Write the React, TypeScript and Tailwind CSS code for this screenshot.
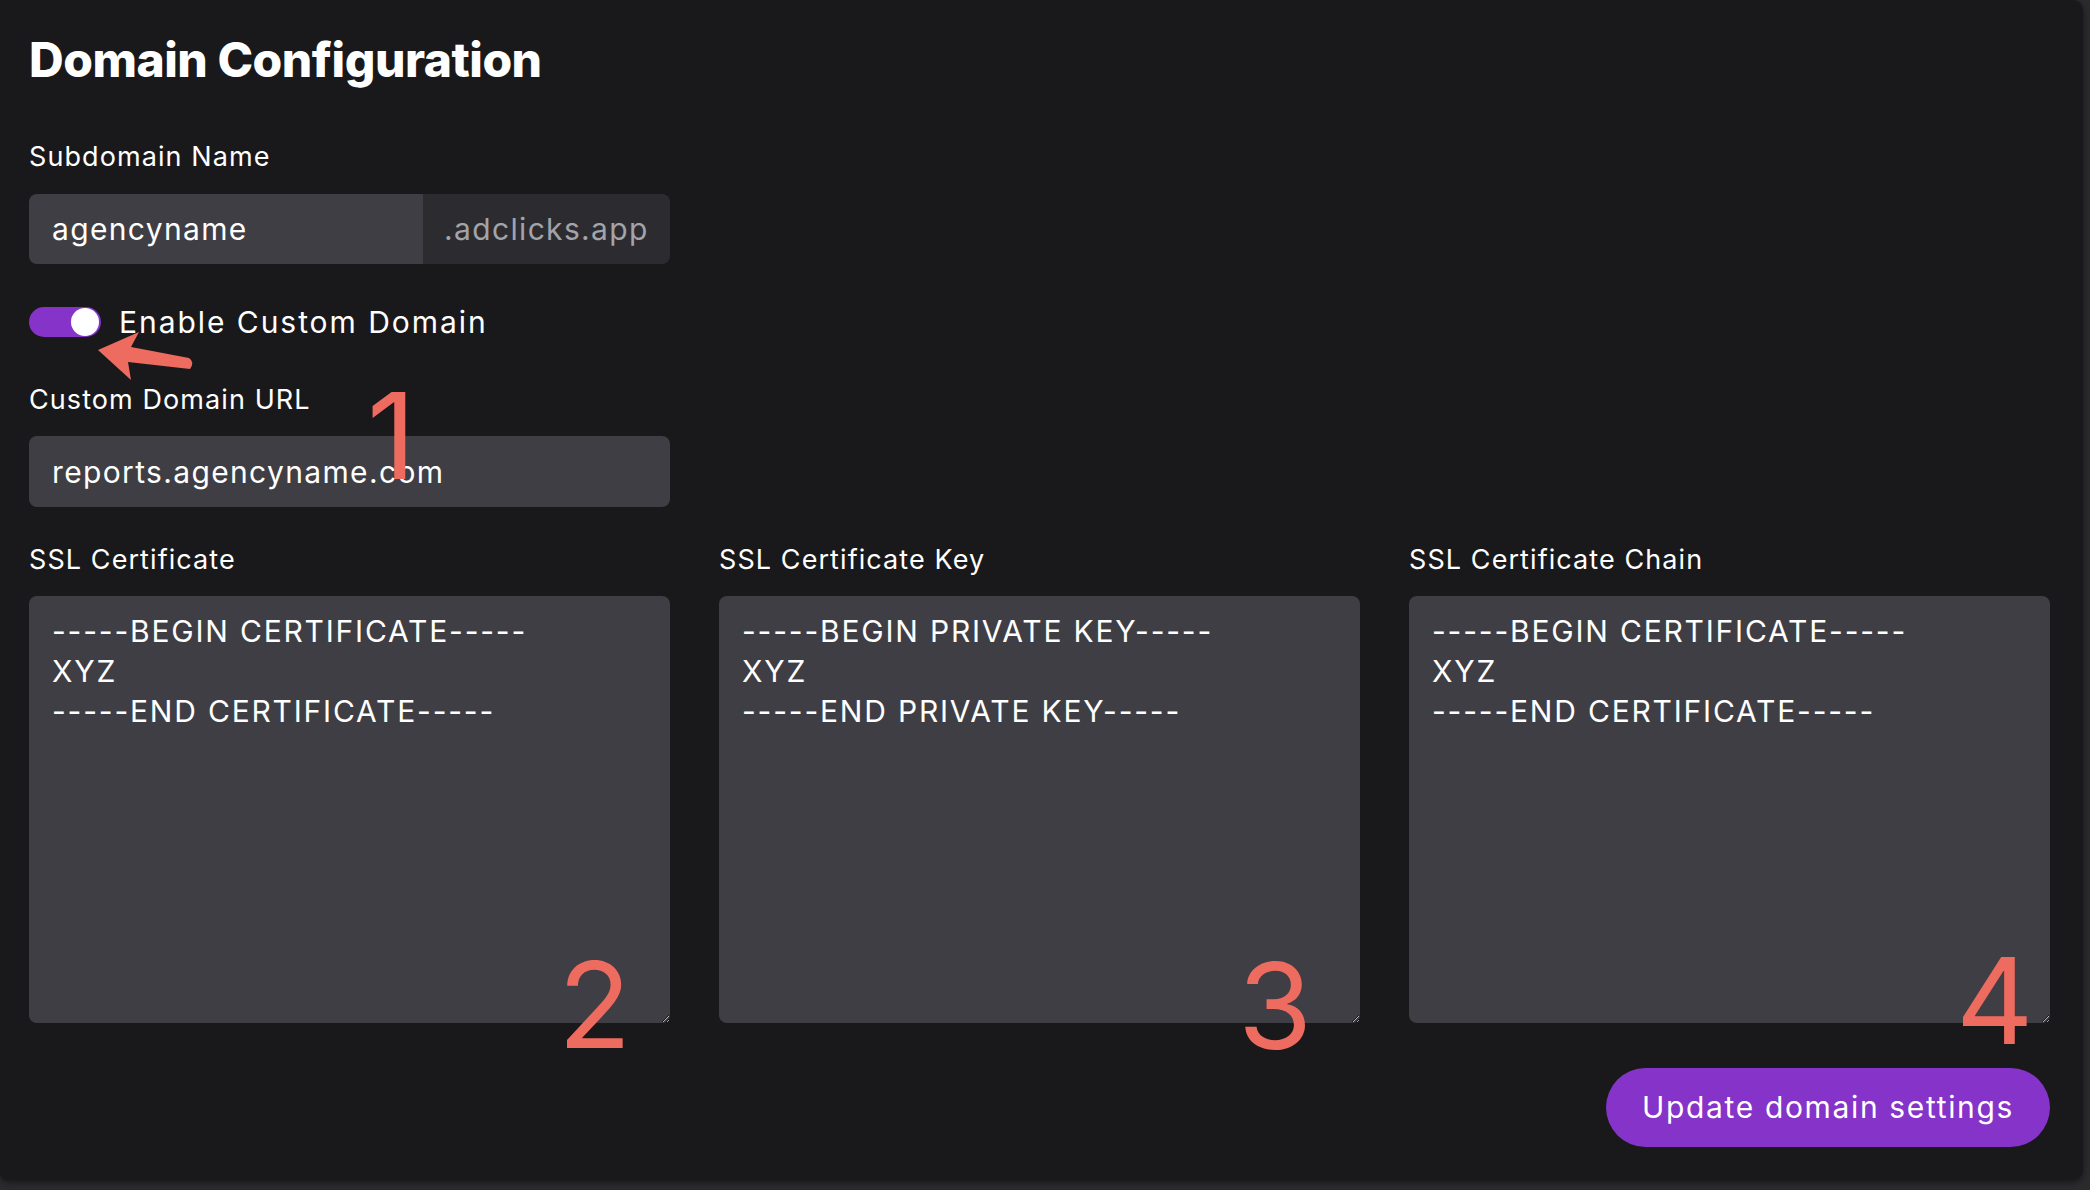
import React from 'react'

const certs = [
  {
    label: 'SSL Certificate',
    value: '-----BEGIN CERTIFICATE-----\nXYZ\n-----END CERTIFICATE-----',
  },
  {
    label: 'SSL Certificate Key',
    value: '-----BEGIN PRIVATE KEY-----\nXYZ\n-----END PRIVATE KEY-----',
  },
  {
    label: 'SSL Certificate Chain',
    value: '-----BEGIN CERTIFICATE-----\nXYZ\n-----END CERTIFICATE-----',
  },
]

function Label({ children }: { children: React.ReactNode }) {
  return (
    <label className="block text-[27px] leading-[36px] tracking-[0.04em] text-white">
      {children}
    </label>
  )
}

function Annotation({ n, className }: { n: string; className: string }) {
  return (
    <span
      className={
        'pointer-events-none absolute text-[120px] leading-none font-normal text-[#ee6b5f] ' +
        className
      }
    >
      {n}
    </span>
  )
}

export default function App() {
  return (
    <div className="min-h-screen bg-[#2b2b2e] font-['Inter',sans-serif]">
      <div className="relative h-[1180px] w-[2083px] rounded-r-[10px] rounded-bl-[8px] bg-[#19191b] pl-[29px] pr-[33px] pt-[31px] shadow-[0_2px_6px_rgba(0,0,0,0.5)]">
        {/* Header */}
        <h1 className="text-[48px] leading-[58px] font-extrabold tracking-[-0.01em] text-white">
          Domain Configuration
        </h1>

        {/* Subdomain */}
        <div className="mt-[50px]">
          <Label>Subdomain Name</Label>
          <div className="mt-[19px] flex h-[70px] w-[641px] overflow-hidden rounded-[8px]">
            <input
              readOnly
              defaultValue="agencyname"
              className="min-w-0 flex-1 bg-[#3f3e44] px-[23px] text-[30px] tracking-[0.045em] text-white outline-none"
            />
            <div className="flex w-[247px] items-center bg-[#2c2c30] pl-[21px] text-[30px] tracking-[0.045em] text-[#a3a3aa]">
              .adclicks.app
            </div>
          </div>
        </div>

        {/* Toggle */}
        <div className="mt-[38px] flex h-[40px] items-center gap-[18px]">
          <button className="relative h-[30px] w-[72px] rounded-full bg-[#8533c9]">
            <span className="absolute right-[2px] top-[1px] h-[28px] w-[28px] rounded-full bg-white" />
          </button>
          <span className="text-[30px] tracking-[0.065em] text-white">Enable Custom Domain</span>
        </div>

        {/* Custom domain */}
        <div className="mt-[40px]">
          <Label>Custom Domain URL</Label>
          <input
            readOnly
            defaultValue="reports.agencyname.com"
            className="mt-[18px] block h-[71px] w-[641px] rounded-[8px] bg-[#3f3e44] px-[23px] text-[30px] tracking-[0.045em] text-white outline-none"
          />
        </div>

        {/* Certificates */}
        <div className="mt-[35px] grid grid-cols-3 gap-x-[49px]">
          {certs.map((c) => (
            <div key={c.label}>
              <Label>{c.label}</Label>
              <textarea
                readOnly
                defaultValue={c.value}
                className="mt-[18px] block h-[427px] w-full rounded-[8px] bg-[#3f3e44] px-[23px] pt-[15px] text-[30px] leading-[40px] tracking-[0.06em] text-white outline-none [color-scheme:dark]"
              />
            </div>
          ))}
        </div>

        <div className="mt-[45px] flex justify-end">
          <button className="h-[79px] rounded-full bg-[#8533c9] px-[36px] text-[30px] tracking-[0.055em] text-white">
            Update domain settings
          </button>
        </div>

        {/* Annotations */}
        <svg
          className="pointer-events-none absolute left-0 top-0"
          width="220"
          height="400"
          viewBox="0 0 220 400"
        >
          <path
            d="M98 350 L139 332 L131 347 L189 358 Q195 362 190 369 L128 362 L131 380 Z"
            fill="#ee6b5f"
          />
        </svg>
        <Annotation n="1" className="left-[367px] top-[376px]" />
        <Annotation n="2" className="left-[558px] top-[945px]" />
        <Annotation n="3" className="left-[1238px] top-[946px]" />
        <Annotation n="4" className="left-[1956px] top-[941px]" />
      </div>
    </div>
  )
}
